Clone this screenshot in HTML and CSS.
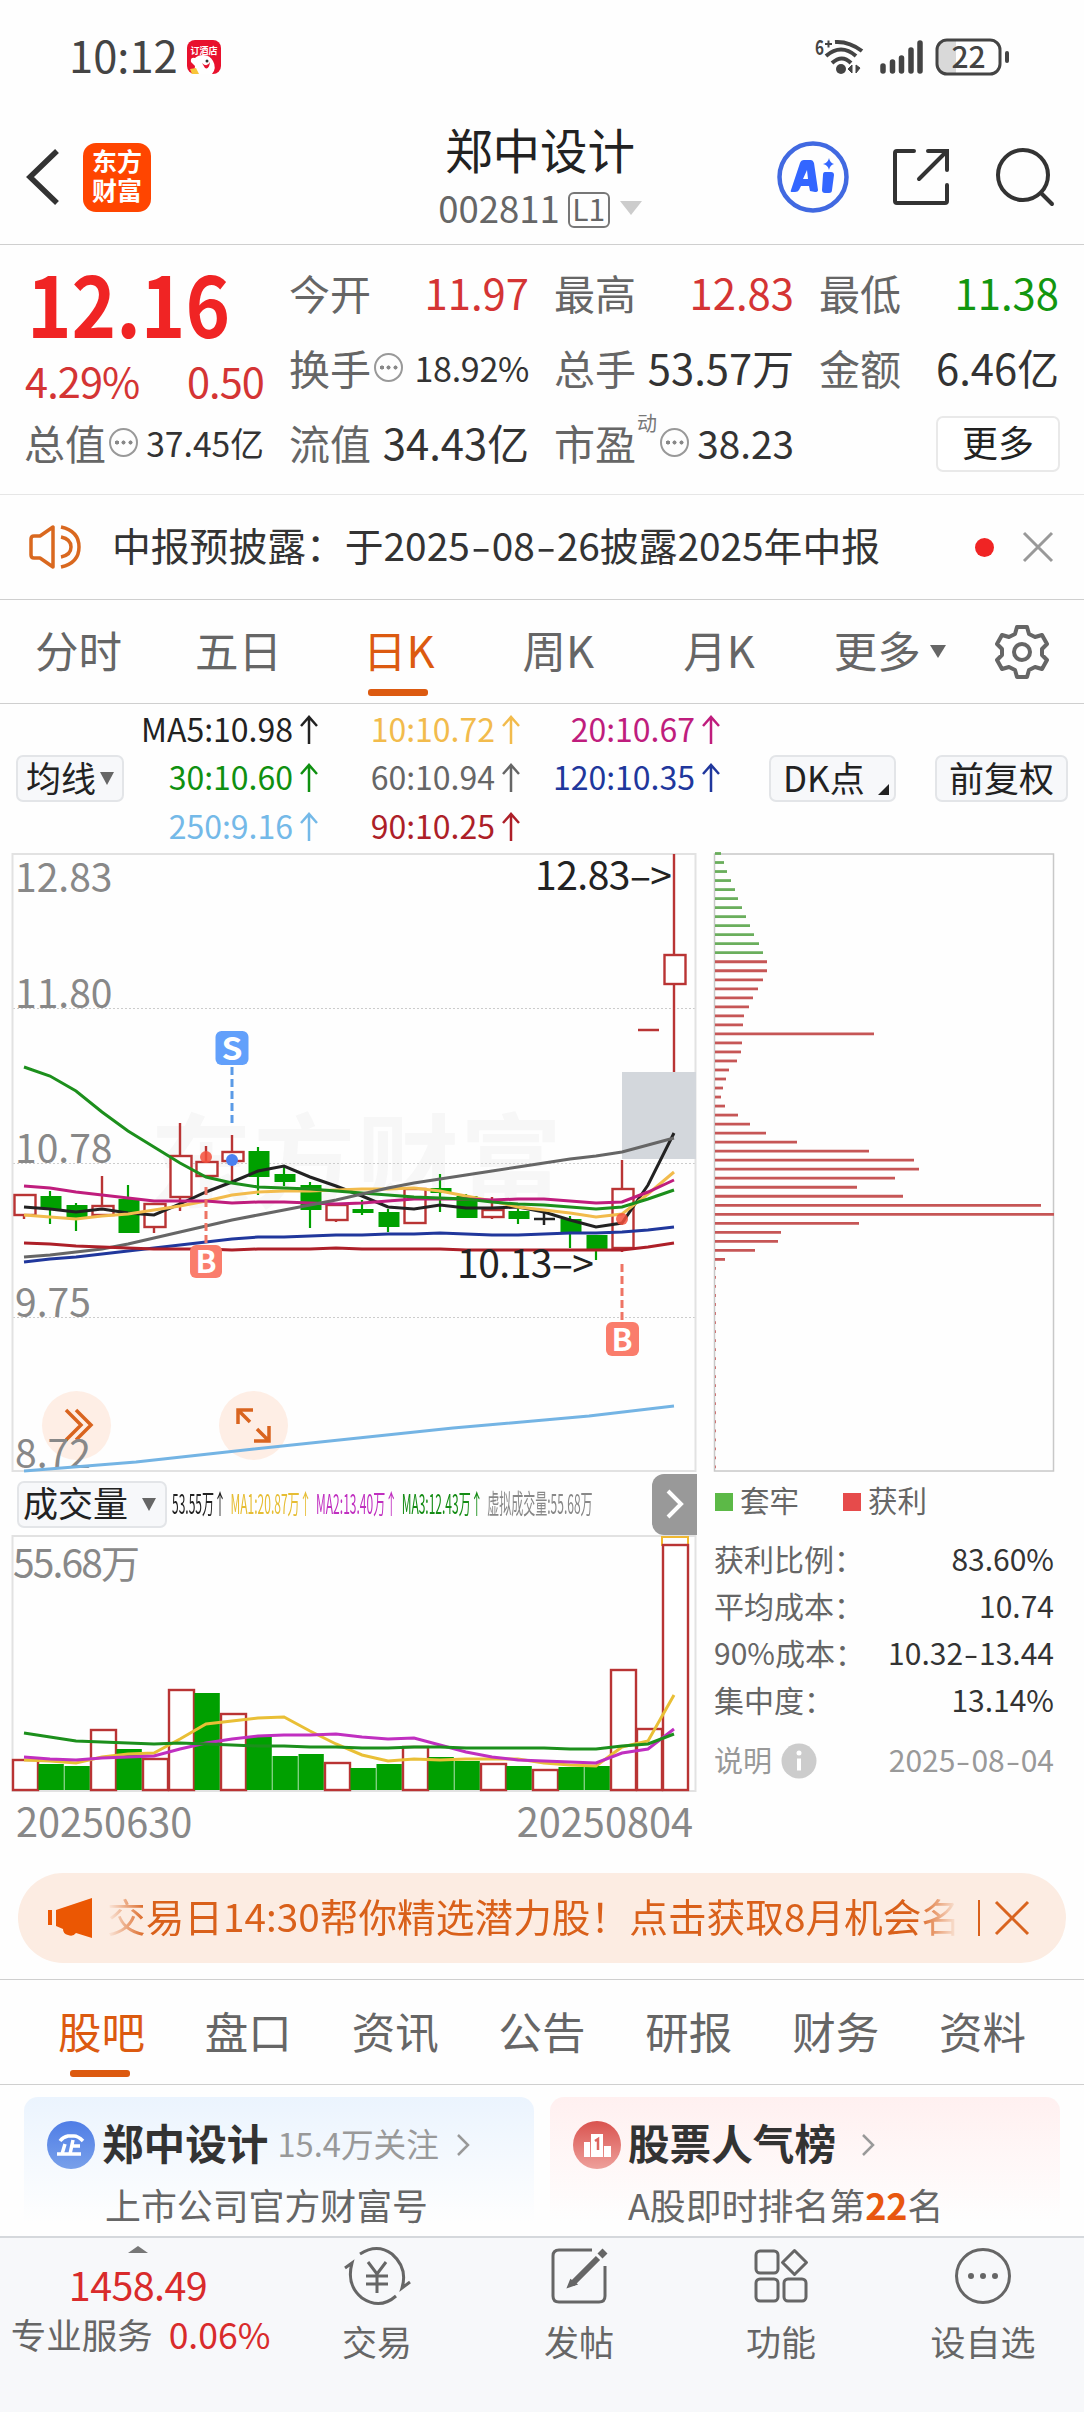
FILE: index.html
```html
<!DOCTYPE html>
<html lang="zh-CN">
<head>
  <meta charset="UTF-8" />
  <meta name="viewport" content="width=device-width, initial-scale=1.0"/>
  <title>郑中设计 002811</title>
  <link rel="stylesheet" href="styles.css">
</head>
<body>

  <div class="status-bar">
    <span class="clock">10:12</span>
    <svg class="app-badge" width="34" height="34" viewBox="0 0 34 34">
      <rect width="34" height="34" rx="8" fill="#e8112d"/>
      <text x="17" y="14" font-size="9" font-weight="700" fill="#fff" text-anchor="middle">订酒店</text>
      <path d="M8 18q-5-1-4 4l4 4-1 8h18q5-6 1-13-3-6-10-6-5 0-8 3z" fill="#fff"/>
      <circle cx="20" cy="21" r="1.5" fill="#333"/>
      <path d="M15 23q5 5 8-1-1 8-5 6z" fill="#e8112d"/>
      <path d="M3 29l6-1 3 6H5z" fill="#f8c53a"/>
    </svg>
    <div class="status-right">
      <svg width="50" height="38" viewBox="0 0 50 38">
        <text x="0" y="17" font-size="20" font-weight="700" fill="#444" textLength="9" lengthAdjust="spacingAndGlyphs">6</text>
        <path d="M10 6h7M13.500 2.500v7" stroke="#444" stroke-width="2"/>
        <g fill="none" stroke="#444" stroke-width="4">
          <path d="M20 4q14-1 27 9"/>
          <path d="M11 18q15-13 30 0"/>
          <path d="M17 25q10-9 19 0"/>
        </g>
        <circle cx="26" cy="31" r="5" fill="#444"/>
        <path d="M37 27v8l-4-4zM41 35v-8l4 3z" fill="#444" stroke="#444"/>
      </svg>
      <svg class="signal" width="44" height="36" viewBox="0 0 44 36" stroke="#444" stroke-width="5.500" stroke-linecap="round">
        <path d="M3 27v5M12.500 23v9M21.500 19v13M31 11v21M40 4v28"/>
      </svg>
      <svg class="battery" width="75" height="38" viewBox="0 0 75 38">
        <path d="M12 3h9v32h-9q-9 0-9-9V12q0-9 9-9z" fill="#d9d9d9"/>
        <rect x="2" y="2" width="63" height="34" rx="10" fill="none" stroke="#444" stroke-width="3"/>
        <path d="M72 15v8" stroke="#444" stroke-width="4" stroke-linecap="round"/>
        <text x="33.500" y="30" font-size="30" font-weight="500" fill="#444" text-anchor="middle">22</text>
      </svg>
    </div>
  </div>

  <div class="header">
    <div class="header-left">
      <svg width="34" height="56" viewBox="0 0 34 56"><path d="M31 2L4 28l27 26" fill="none" stroke="#333" stroke-width="5.500"/></svg>
      <div class="logo"><span>东方</span><span>财富</span></div>
    </div>
    <div class="header-title">
      <h1>郑中设计</h1>
      <div class="code">002811<span class="level">L1</span><i class="tri-down"></i></div>
    </div>
    <div class="header-right">
      <svg width="72" height="72" viewBox="0 0 72 72">
        <circle cx="36" cy="36" r="33.500" fill="none" stroke="#4169e1" stroke-width="4.500"/>
        <path d="M14 49l9-27q1-3 4-3h7q2 0 3 3l4 27q0 2-3 2l-5-1-1-5h-8l-2 4q-1 2-4 2h-3q-2 0-1-2zM26 38h5l-1-9z" fill="#3366ff" fill-rule="evenodd"/>
        <path d="M48 31h6q3 0 3 3l-2 15q0 3-3 3h-4q-3 0-3-3l1-15q0-3 2-3z" fill="#3366ff"/>
        <path d="M52 17q1 5 5 6-4 1-5 6-1-5-6-6 5-1 6-6z" fill="#3366ff"/>
      </svg>
      <svg class="share" width="58" height="58" viewBox="0 0 58 58" fill="none" stroke="#333" stroke-width="4" stroke-linecap="round">
        <path d="M22 3H5q-2 0-2 2v48q0 2 2 2h48q2 0 2-2V37"/>
        <path d="M36 3h19v19M54 4L27 31"/>
      </svg>
      <svg width="58" height="58" viewBox="0 0 58 58" fill="none" stroke="#333" stroke-width="4" stroke-linecap="round">
        <circle cx="27" cy="27" r="25"/><path d="M45 45l11 11"/>
      </svg>
    </div>
  </div>

  <div class="stats">
    <div class="price-col">
      <div class="price">12.16</div>
      <div class="change"><span>4.29%</span><span>0.50</span></div>
    </div>
    <div class="stat"><label>今开</label><b class="red">11.97</b></div>
    <div class="stat"><label>最高</label><b class="red">12.83</b></div>
    <div class="stat"><label>最低</label><b class="green">11.38</b></div>
    <div class="stat"><label>换手</label><i class="dots"></i><b class="mid">18.92%</b></div>
    <div class="stat"><label>总手</label><b>53.57万</b></div>
    <div class="stat"><label>金额</label><b>6.46亿</b></div>
    <div class="stat"><label>总值</label><i class="dots"></i><b class="small">37.45亿</b></div>
    <div class="stat"><label>流值</label><b>34.43亿</b></div>
    <div class="stat"><label>市盈</label><sup>动</sup><i class="dots"></i><b class="pe">38.23</b></div>
    <div class="stat"><button class="more-btn">更多</button></div>
  </div>

  <div class="notice">
    <svg width="52" height="46" viewBox="0 0 52 46" fill="none" stroke="#d9681f" stroke-width="3.500">
      <path d="M24 3v40L11 34H5q-3 0-3-3V15q0-3 3-3h6z" stroke-linejoin="round"/>
      <path d="M32 13q10 2 10 10t-10 10"/><path d="M32 3q18 4 18 20T32 43"/>
    </svg>
    <span class="notice-text">中报预披露：于2025<em>-</em>08<em>-</em>26披露2025年中报</span>
    <i class="red-dot"></i>
    <svg width="30" height="30" viewBox="0 0 30 30" stroke="#999" stroke-width="3"><path d="M1 1l28 28M29 1L1 29"/></svg>
  </div>

  <div class="period-tabs">
    <span>分时</span>
    <span>五日</span>
    <span class="active">日K</span>
    <span>周K</span>
    <span>月K</span>
    <span>更多<i class="tri-down"></i></span>
    <svg width="54" height="54" viewBox="0 0 54 54" fill="none" stroke="#666" stroke-width="4" stroke-linejoin="round">
      <path d="M22 2h10l2 7 6 3 7-2 5 9-5 5v6l5 5-5 9-7-2-6 3-2 7H22l-2-7-6-3-7 2-5-9 5-5v-6l-5-5 5-9 7 2 6-3z"/>
      <circle cx="27" cy="27" r="8"/>
    </svg>
  </div>

  <div class="ma-bar">
    <button class="pill">均线<i class="tri-down"></i></button>
    <div class="ma-grid">
      <span style="color:#222">MA5:10.98<svg class="up"><use href="#arrow-up"/></svg></span>
      <span style="color:#f2bb4c">10:10.72<svg class="up"><use href="#arrow-up"/></svg></span>
      <span style="color:#bf1d7d">20:10.67<svg class="up"><use href="#arrow-up"/></svg></span>
      <span style="color:#0f9010">30:10.60<svg class="up"><use href="#arrow-up"/></svg></span>
      <span style="color:#666">60:10.94<svg class="up"><use href="#arrow-up"/></svg></span>
      <span style="color:#20379c">120:10.35<svg class="up"><use href="#arrow-up"/></svg></span>
      <span style="color:#74b9e8">250:9.16<svg class="up"><use href="#arrow-up"/></svg></span>
      <span style="color:#ad1f28">90:10.25<svg class="up"><use href="#arrow-up"/></svg></span>
    </div>
    <button class="pill dk">DK点<i class="corner"></i></button>
    <button class="pill fq">前复权</button>
  </div>

  <div class="chart-area">
    <div class="chart-left">
      <svg id="kline" width="700" height="620" viewBox="0 0 700 620">
        <symbol id="arrow-up" viewBox="0 0 18 30"><path d="M9 29V2M1 11l8-9 8 9" fill="none" stroke="currentColor" stroke-width="2.500"/></symbol>
        <text x="150" y="347" font-size="102" font-weight="700" fill="#f7f7f7" textLength="412">东方财富</text>
        <g stroke="#ccc" stroke-dasharray="2 2">
          <path d="M13 155.500h683M13 310.500h683M13 464.500h683"/>
        </g>
        <rect x="12.500" y="1" width="683" height="617" fill="none" stroke="#e2e2e2" stroke-width="2"/>
        <rect x="622" y="219" width="74" height="87" fill="#d3d7dc"/>
        <g id="candles"></g>
        <g class="axis">
          <text x="15" y="38.500">12.83</text>
          <text x="15" y="154.500">11.80</text>
          <text x="15" y="309.500">10.78</text>
          <text x="15" y="463.500">9.75</text>
        </g>
        <g class="round-btn">
          <circle cx="76.500" cy="572.500" r="34.500"/>
          <path d="M66 557l15 15-15 15M76 557l15 15-15 15"/>
          <circle cx="253.500" cy="572.500" r="34.500"/>
          <path d="M250 569l-12-12M238 571v-14h15M257 576l12 12M269 573v15h-15"/>
        </g>
        <g class="axis"><text x="15" y="614.500">8.72</text></g>
        <g id="ma-lines" fill="none" stroke-width="3"></g>
        <g fill="none" stroke-width="3" stroke-dasharray="8 4">
          <path d="M232 214v58" stroke="#5a9ae6"/>
          <path d="M206 334v58M622 411v58" stroke="#ee7464"/>
        </g>
        <g fill="#f4503c" fill-opacity="0.850">
          <circle cx="206" cy="304" r="6"/><circle cx="622" cy="366" r="6"/>
        </g>
        <circle cx="232" cy="307" r="6" fill="#4a80f0"/>
        <g class="mark">
          <rect x="215.500" y="178" width="33" height="34" rx="6" fill="#62a0fb"/>
          <text x="232" y="207" textLength="21" lengthAdjust="spacingAndGlyphs">S</text>
          <rect x="190" y="392" width="32" height="33" rx="6" fill="#fa7d6c"/>
          <text x="206" y="420">B</text>
          <rect x="606" y="469" width="33" height="34" rx="6" fill="#fa7d6c"/>
          <text x="622" y="498">B</text>
        </g>
        <g font-size="39" fill="#222">
          <text x="535" y="37" textLength="137">12.83–&gt;</text>
          <text x="457" y="424.500" textLength="137">10.13–&gt;</text>
        </g>
      </svg>

      <div class="vol-head">
        <button class="pill vol">成交量<i class="tri-down"></i></button>
        <div class="vol-values">
          <span style="color:#222">53.55万↑</span>
          <span style="color:#e6bd33">MA1:20.87万↑</span>
          <span style="color:#c02fc0">MA2:13.40万↑</span>
          <span style="color:#148c14">MA3:12.43万↑</span>
          <span style="color:#888">虚拟成交量:55.68万</span>
        </div>
        <button class="next-btn"><svg width="18" height="32" viewBox="0 0 18 32"><path d="M2 3l13 13L2 29" fill="none" stroke="#fff" stroke-width="4"/></svg></button>
      </div>

      <svg id="volume" width="700" height="258" viewBox="0 0 700 258">
        <rect x="12.500" y="1" width="683" height="255" fill="none" stroke="#e2e2e2" stroke-width="2"/>
        <g id="vol-bars"></g>
        <g class="axis"><text x="13" y="43" textLength="127">55.68万</text></g>
        <g id="vol-lines" fill="none" stroke-width="3"></g>
      </svg>
      <div class="dates"><span>20250630</span><span>20250804</span></div>
    </div>

    <div class="chart-right">
      <svg id="chips" width="342" height="620" viewBox="0 0 342 620">
        <rect x="0.500" y="1" width="339" height="617" fill="none" stroke="#c8c8c8" stroke-width="1.500"/>
      </svg>
      <div class="legend"><i class="sq-green"></i>套牢<i class="sq-red"></i>获利</div>
      <div class="cost"><span>获利比例：</span><b>83.60%</b></div>
      <div class="cost"><span>平均成本：</span><b>10.74</b></div>
      <div class="cost"><span>90%成本：</span><b>10.32<em>-</em>13.44</b></div>
      <div class="cost"><span>集中度：</span><b>13.14%</b></div>
      <div class="cost explain">
        <span>说明<svg width="36" height="36" viewBox="0 0 36 36"><circle cx="18" cy="18" r="17.500" fill="#ccc"/><path d="M18 15.500v12" stroke="#fff" stroke-width="4"/><circle cx="18" cy="10" r="2.500" fill="#fff"/></svg></span>
        <b>2025<em>-</em>08<em>-</em>04</b>
      </div>
    </div>
  </div>

  <div class="promo">
    <svg width="48" height="42" viewBox="0 0 48 42" fill="#eb5703">
      <path d="M1 13h4v15H1zM9 13L45 1v40l-16-5q-3 4-8 2-5-1-5-6l-7-3z"/>
    </svg>
    <div class="promo-text">交易日14:30帮你精选潜力股！点击获取8月机会名</div>
    <i class="divider"></i>
    <svg width="34" height="34" viewBox="0 0 34 34" stroke="#d9641f" stroke-width="3"><path d="M1 1l32 32M33 1L1 33"/></svg>
  </div>

  <div class="section-tabs">
    <span class="active">股吧</span>
    <span>盘口</span>
    <span>资讯</span>
    <span>公告</span>
    <span>研报</span>
    <span>财务</span>
    <span>资料</span>
  </div>

  <div class="cards">
    <div class="card blue">
      <div class="card-title">
        <svg width="48" height="48" viewBox="0 0 48 48">
          <defs><linearGradient id="gb" x1="0" y1="0" x2="0" y2="1"><stop offset="0" stop-color="#4f7de6"/><stop offset="1" stop-color="#78a0ea"/></linearGradient></defs>
          <circle cx="24" cy="24" r="24" fill="url(#gb)"/>
          <path d="M13 20q3-4 8-5h6q4 0 9 5M26 19l-3 14M25 25h8M18 23l-3 10M10 33h24" fill="none" stroke="#fff" stroke-width="3.500"/>
        </svg>
        <strong>郑中设计</strong><small>15.4万关注</small>
        <svg class="chev" width="14" height="24" viewBox="0 0 14 24"><path d="M2 2l10 10L2 22" fill="none" stroke="#999" stroke-width="2.500"/></svg>
      </div>
      <p>上市公司官方财富号</p>
    </div>
    <div class="card pink">
      <div class="card-title">
        <svg width="48" height="48" viewBox="0 0 48 48">
          <defs><linearGradient id="gr" x1="0" y1="0" x2="0" y2="1"><stop offset="0" stop-color="#d9534f"/><stop offset="1" stop-color="#eea09b"/></linearGradient></defs>
          <circle cx="24" cy="24" r="24" fill="url(#gr)"/>
          <path d="M11 21h6v15h-6zM18 13h12v23H18zM31 25h7v11h-7z" fill="#fff"/>
          <path d="M22 20l3-2v11" fill="none" stroke="#dd6560" stroke-width="2.500"/>
        </svg>
        <strong>股票人气榜</strong>
        <svg class="chev" width="14" height="24" viewBox="0 0 14 24"><path d="M2 2l10 10L2 22" fill="none" stroke="#999" stroke-width="2.500"/></svg>
      </div>
      <p>A股即时排名第<b>22</b>名</p>
    </div>
  </div>

  <div class="bottom-bar">
    <div class="index">
      <i class="tri-up"></i>
      <div class="index-value">1458.49</div>
      <div class="index-name">专业服务<span>0.06%</span></div>
    </div>
    <div class="nav-item">
      <svg width="66" height="58" viewBox="0 0 66 58" fill="none" stroke="#666" stroke-width="3">
        <path d="M16 7Q33-4 48 7q16 14 10 34l8-6M52 49Q36 63 18 51 2 38 8 16L1 21"/>
        <path d="M24 15l9 12 9-12M33 27v19M22 29h22M22 37h22"/>
      </svg>
      <span>交易</span>
    </div>
    <div class="nav-item">
      <svg width="58" height="58" viewBox="0 0 58 58" fill="none" stroke="#666" stroke-width="3">
        <path d="M42 3H9q-6 0-6 6v40q0 6 6 6h40q6 0 6-6V19"/>
        <path d="M48 11L22 37" stroke-width="6"/><path d="M50 9l5-5" stroke-width="7"/><path d="M21 34l-2 5 6-2z"/>
      </svg>
      <span>发帖</span>
    </div>
    <div class="nav-item">
      <svg width="54" height="54" viewBox="0 0 54 54" fill="none" stroke="#666" stroke-width="3">
        <rect x="2" y="2" width="22" height="22" rx="4"/><rect x="2" y="30" width="22" height="22" rx="4"/>
        <rect x="30" y="30" width="22" height="22" rx="4"/><path d="M40.500 1.500l12 12-12 12-12-12z" stroke-linejoin="round"/>
      </svg>
      <span>功能</span>
    </div>
    <div class="nav-item">
      <svg width="58" height="58" viewBox="0 0 58 58" fill="none" stroke="#666" stroke-width="3">
        <circle cx="29" cy="29" r="26.500"/>
        <g fill="#666" stroke="none"><circle cx="17" cy="29" r="3"/><circle cx="29" cy="29" r="3"/><circle cx="41" cy="29" r="3"/></g>
      </svg>
      <span>设自选</span>
    </div>
  </div>

  <script>
    const NS = 'http://www.w3.org/2000/svg';
    const RED = '#b93434', GREEN = '#00a000';
    const x = i => 24 + 26 * i;

    const add = (parent, tag, attrs) => {
      const el = document.createElementNS(NS, tag);
      for (const k in attrs) el.setAttribute(k, attrs[k]);
      document.getElementById(parent).appendChild(el);
    };

    // [direction, high, bodyTop, bodyBottom, low]
    const candles = [
      ['r', 342, 342, 362, 366], ['g', 338, 343, 356, 371], ['g', 350, 352, 365, 378],
      ['r', 323, 353, 362, 362], ['g', 332, 346, 380, 380], ['r', 351, 351, 374, 380],
      ['r', 270, 303, 344, 358], ['r', 293, 309, 323, 323], ['r', 282, 299, 308, 329],
      ['g', 294, 298, 324, 342], ['g', 314, 321, 329, 333], ['g', 329, 332, 357, 375],
      ['r', 352, 352, 367, 369], ['g', 347, 356, 360, 362], ['g', 356, 359, 374, 379],
      ['r', 336, 336, 370, 370], ['g', 321, 335, 340, 359], ['g', 341, 343, 365, 365],
      ['r', 344, 357, 364, 366], ['g', 354, 358, 366, 371], ['k', 360, 366, 366, 372],
      ['g', 363, 366, 379, 395], ['g', 382, 382, 396, 407], ['r', 307, 336, 395, 399],
      ['d', 177, 177, 177, 177], ['r', 1, 102, 131, 219]
    ];
    candles.forEach(([dir, high, top, bottom, low], i) => {
      const c = x(i);
      if (dir === 'd') {
        add('candles', 'path', { d: `M${c - 10} ${top}h21`, stroke: RED, 'stroke-width': 2.5 });
      } else if (dir === 'k') {
        add('candles', 'path', { d: `M${c - 10} ${top}h21M${c} ${high}v${low - high}`, stroke: '#222', 'stroke-width': 2.5 });
      } else if (dir === 'g') {
        add('candles', 'path', { d: `M${c} ${high}V${low}`, stroke: GREEN, 'stroke-width': 2.2 });
        add('candles', 'rect', { x: c - 9.5, y: top, width: 21, height: bottom - top, fill: GREEN });
      } else {
        add('candles', 'path', { d: `M${c} ${high}V${top}M${c} ${bottom}V${low}`, stroke: RED, 'stroke-width': 2.4 });
        add('candles', 'rect', { x: c - 9.5, y: top, width: 21, height: bottom - top, fill: '#fff', stroke: RED, 'stroke-width': 2.4 });
      }
    });

    const drawLine = (parent, color, ys) =>
      add(parent, 'polyline', { stroke: color, points: ys.map((y, i) => x(i) + ',' + y).join(' ') });

    drawLine('ma-lines', '#222', [354,356,359,356,360,362,351,339,329,318,313,324,333,343,354,356,352,355,355,354,359,367,374,370,332,280]);
    drawLine('ma-lines', '#f2bb4c', [362,364,366,363,361,357,353,348,342,339,338,338,337,336,336,335,338,343,348,354,357,360,364,361,341,319]);
    drawLine('ma-lines', '#bf1d7d', [333,335,339,342,345,348,348,348,350,349,349,350,351,350,348,346,346,346,347,346,346,348,350,349,339,327]);
    drawLine('ma-lines', '#1c8f1c', [214,223,238,259,278,294,310,324,330,334,335,336,338,340,342,344,345,346,349,351,352,354,356,354,346,337]);
    drawLine('ma-lines', '#666', [404,402,399,396,391,385,379,373,367,362,357,352,347,341,335,330,326,322,318,314,310,306,303,299,292,285]);
    drawLine('ma-lines', '#20379c', [409,406,404,401,398,395,392,389,386,384,384,383,382,382,381,381,380,381,382,382,381,380,380,379,377,374]);
    drawLine('ma-lines', '#ad1f28', [390,391,393,394,395,396,396,396,397,396,396,396,395,396,396,396,396,397,397,397,397,397,397,397,394,390]);
    add('ma-lines', 'polyline', { stroke: '#74b4e4', points: '24,618 136,609 254,596 453,575 589,563 674,553' });

    const volumes = [
      'r225','g229','g231','r195','g214','r224','r155','g158','r179','g202','g221','g219','r228',
      'g233','g229','r212','g222','g226','r229','g231','r235','g232','g231','r135','r194','r10'
    ];
    add('vol-bars', 'path', { d: 'M662 11V2h26v9', fill: 'none', stroke: '#f0b830', 'stroke-width': 2 });
    volumes.forEach((v, i) => {
      const top = +v.slice(1), left = x(i) - 11;
      if (v[0] === 'g') add('vol-bars', 'rect', { x: left - 0.5, y: top, width: 25.3, height: 255 - top, fill: GREEN });
      else add('vol-bars', 'rect', { x: left, y: top, width: 25, height: 255 - top, fill: '#fff', stroke: RED, 'stroke-width': 2.4 });
    });
    drawLine('vol-lines', '#e9bf36', [225,226,228,222,219,218,204,189,186,183,182,196,209,220,226,224,225,224,224,224,228,230,231,212,206,160]);
    drawLine('vol-lines', '#c02fc0', [222,224,225,223,222,221,214,208,204,201,200,200,199,202,204,203,210,217,222,225,226,227,228,218,214,194]);
    drawLine('vol-lines', '#1c8f1c', [198,202,206,207,208,209,208,209,210,211,211,212,212,213,213,212,212,213,213,213,213,214,214,211,209,199]);

    // chip distribution, top price first
    const chips = [
      6,9,12,16,20,23,27,31,35,39,44,48,
      52,52,48,43,38,34,29,28,159,27,26,22,14,11,8,6,10,23,35,51,82,154,199,204,180,142,188,326,339,144,66,63,40,10
    ];
    for (let k = 0; k < 69; k++) {
      const y = 0.5 + 9.02 * k;
      add('chips', 'path', { d: `M1 ${y}h${chips[k] || 0.8}`, stroke: k < 12 ? '#6aae5c' : '#c65656', 'stroke-width': 2.8 });
    }
  </script>

</body>
</html>
```
FILE: styles.css
```css
* {
  box-sizing: border-box;
}

body {
  margin: 0;
  width: 1084px;
  height: 2412px;
  overflow: hidden;
  background: #fefefe;
  color: #333;
  font-family: "Noto Sans CJK SC", sans-serif;
  font-size: 41px;
  line-height: 1;
}

svg {
  display: block;
  flex: none;
  overflow: visible;
}

i, em {
  font-style: normal;
}

b {
  font-weight: 400;
}

button {
  font-family: inherit;
  color: #222;
  padding: 0;
}

.red { color: #d43434; }
.green { color: #12960f; }

.tri-down {
  display: inline-block;
  border: 8px solid transparent;
  border-top: 13px solid #666;
  border-bottom: 0;
}

/* status bar */
.status-bar {
  display: flex;
  align-items: center;
  height: 110px;
  padding: 4px 74px 0 69px;
  color: #444;
}

.clock {
  font-size: 43.500px;
  line-height: 50px;
  width: 118px;
  margin-top: -5px;
}

.status-right {
  display: flex;
  align-items: center;
  margin-left: auto;
}

.signal { margin: 0 11px 0 15px; }

/* header */
.header {
  display: grid;
  grid-template-columns: 1fr auto 1fr;
  align-items: center;
  height: 135px;
  border-bottom: 1px solid #cfcfcf;
}

.header-left {
  display: flex;
  align-items: center;
  gap: 23px;
  padding-left: 26px;
}

.logo {
  width: 68px;
  height: 69px;
  border-radius: 13px;
  background: #ff4500;
  color: #fff;
  display: flex;
  flex-direction: column;
  align-items: center;
  justify-content: center;
  font-size: 25px;
  font-weight: 700;
  line-height: 29px;
  padding-bottom: 4px;
}

.header-title {
  text-align: center;
}

.header-title h1 {
  margin: 0 4px 0 0;
  font-size: 47.500px;
  font-weight: 400;
  line-height: 62px;
  color: #222;
  height: 62px;
}

.code {
  display: flex;
  align-items: center;
  justify-content: center;
  margin-right: 4px;
  font-size: 36.500px;
  line-height: 48px;
  height: 56px;
  color: #666;
}

.level {
  width: 42px;
  height: 36px;
  margin: 3px 10px 0 8px;
  border: 2px solid #777;
  border-radius: 6px;
  font-size: 30px;
  line-height: 28px;
  text-align: center;
}

.code .tri-down {
  border-width: 14px 11px 0;
  border-top-color: #ccc;
}

.header-right {
  display: flex;
  align-items: center;
  justify-content: flex-end;
  padding-right: 30px;
}

.share { margin: 0 46px 0 43px; }

/* quote numbers */
.stats {
  display: grid;
  grid-template-columns: repeat(4, 239px);
  grid-template-rows: repeat(3, 75px);
  column-gap: 26px;
  height: 250px;
  padding: 12px 25px;
  border-bottom: 1px solid #e6e6e6;
}

.price-col {
  grid-row: 1 / 3;
  color: #d43434;
}

.price {
  font-size: 84px;
  font-weight: 700;
  line-height: 90px;
  height: 100px;
  margin-left: 2px;
  color: #f02424;
  transform: scaleX(0.9);
  transform-origin: 0 0;
}

.change {
  display: flex;
  justify-content: space-between;
  font-size: 41.500px;
  line-height: 46px;
  letter-spacing: -0.900px;
}

.stat {
  display: flex;
  align-items: center;
  line-height: 75px;
  padding-bottom: 5px;
}

.stat label {
  color: #666;
  margin-left: -1px;
}

.stat b {
  margin-left: auto;
  font-size: 41.800px;
}

.stat .mid { font-size: 34px; letter-spacing: -0.300px; }
.stat .small { font-size: 33.700px; }
.stat .pe { font-size: 38.700px; }

.stat sup {
  font-size: 20px;
  line-height: 20px;
  color: #777;
  margin: 0 3px 38px 1px;
}

.dots {
  width: 29px;
  height: 29px;
  margin-left: 3px;
  border: 2px solid #999;
  border-radius: 50%;
  background:
    radial-gradient(circle, #888 1.800px, transparent 2.300px) -6.500px 0 no-repeat,
    radial-gradient(circle, #888 1.800px, transparent 2.300px) 0 0 no-repeat,
    radial-gradient(circle, #888 1.800px, transparent 2.300px) 6.500px 0 no-repeat;
}

sup + .dots { margin-left: 0; }

.more-btn {
  width: 124px;
  height: 56px;
  margin: 3px -1px 0 auto;
  border: 2px solid #e9e9e9;
  border-radius: 7px;
  background: #fff;
  font-size: 36px;
  line-height: 44px;
  padding-bottom: 6px;
}

/* notice */
.notice {
  display: flex;
  align-items: center;
  height: 105px;
  padding: 0 31px 0 29px;
  border-bottom: 1px solid #cfcfcf;
}

.notice-text {
  margin-left: 31px;
  margin-top: -6px;
  font-size: 38.800px;
  line-height: 50px;
}

.notice-text em {
  display: inline-block;
  width: 22px;
  text-align: center;
  transform: scaleX(1.500);
}

.red-dot {
  width: 19px;
  height: 19px;
  border-radius: 50%;
  background: #f02424;
  margin: 0 29px 0 auto;
}

/* period tabs */
.period-tabs {
  display: flex;
  align-items: center;
  height: 104px;
  padding: 0 35px 0 35px;
  border-bottom: 1px solid #cfcfcf;
  font-size: 43.500px;
  line-height: 98px;
  color: #666;
}

.period-tabs span {
  position: relative;
  height: 102px;
}

.period-tabs span + span { margin-left: 73px; }
.period-tabs span:nth-child(3) { margin-left: 81px; }
.period-tabs span:nth-child(4) { margin-left: 88px; }
.period-tabs span:nth-child(5) { margin-left: 89px; }
.period-tabs span:nth-child(6) { margin-left: 79px; }
.period-tabs svg { margin-left: auto; }

.period-tabs .tri-down {
  border-width: 13px 8px 0;
  margin-left: 9px;
  vertical-align: 10px;
}

.period-tabs .active,
.section-tabs .active {
  color: #dc5a10;
}

.period-tabs .active::after,
.section-tabs .active::after {
  content: "";
  position: absolute;
  left: 50%;
  bottom: 7px;
  width: 60px;
  height: 7px;
  margin-left: -31px;
  border-radius: 3px;
  background: #dc5a10;
}

/* moving averages */
.ma-bar {
  display: flex;
  align-items: center;
  height: 149px;
  padding-left: 16px;
}

.pill {
  display: flex;
  align-items: center;
  height: 47px;
  width: 108px;
  padding: 0 0 4px 8px;
  border: 2px solid #e3e5e8;
  border-radius: 7px;
  background: #f7f8fa;
  font-size: 35px;
  line-height: 40px;
}

.pill .tri-down {
  border-width: 13px 7px 0;
  margin: 4px 0 0 4px;
}

.pill.dk {
  position: relative;
  width: 127px;
  margin-left: 49px;
  padding-left: 12px;
}

.pill.fq {
  width: 133px;
  margin-left: 39px;
  padding-left: 12px;
}

.corner {
  position: absolute;
  right: 5px;
  bottom: 5px;
  border-bottom: 11px solid #222;
  border-left: 11px solid transparent;
}

.ma-grid {
  display: grid;
  grid-template-columns: 194px 202px 200px;
  grid-auto-rows: 48.500px;
  font-size: 32px;
  line-height: 44px;
}

.ma-grid span {
  display: flex;
  justify-content: flex-end;
}

.up {
  width: 18px;
  height: 30px;
  margin: 9px 0 0 7px;
}

/* charts */
.chart-area {
  display: flex;
  height: 1020px;
}

.chart-left {
  width: 714px;
}

.axis {
  font-size: 39px;
  fill: #888;
}

.round-btn circle { fill: #feeee5; }

.round-btn path {
  fill: none;
  stroke: #d9641f;
  stroke-width: 3.500;
}

.mark text {
  font-size: 31px;
  font-weight: 700;
  fill: #fff;
  text-anchor: middle;
}

.vol-head {
  display: flex;
  align-items: center;
  height: 62px;
  width: 697px;
  padding-left: 17px;
}

.pill.vol {
  flex: none;
  width: 150px;
  margin-right: 5px;
  padding-left: 4px;
}

.pill.vol .tri-down { margin-left: 14px; }

/* squeezed so that all five values fit on one line */
.vol-values {
  flex: none;
  display: flex;
  gap: 10px;
  width: 430px;
  margin-top: -3px;
  font-size: 27px;
  line-height: 40px;
  white-space: nowrap;
  transform: scaleX(0.445);
  transform-origin: 0 0;
}

.next-btn {
  display: flex;
  align-items: center;
  justify-content: center;
  width: 45px;
  height: 61px;
  margin-left: auto;
  border: 0;
  border-radius: 12px 0 0 12px;
  background: #999;
}

.dates {
  display: flex;
  justify-content: space-between;
  width: 693px;
  padding-left: 16px;
  font-size: 39.700px;
  line-height: 54px;
  color: #888;
}

.chart-right {
  width: 340px;
}

.legend {
  display: flex;
  align-items: center;
  height: 54px;
  margin-bottom: 10px;
  font-size: 29.500px;
  color: #666;
}

.legend i {
  width: 18px;
  height: 18px;
  margin: 3px 7px 0 1px;
}

.sq-green { background: #5cb947; }
.legend .sq-red { background: #e64b4b; margin-left: 44px; }

.cost {
  display: flex;
  justify-content: space-between;
  height: 47px;
  font-size: 30px;
  line-height: 42px;
  color: #666;
}

.cost b { color: #333; }

.cost em {
  display: inline-block;
  width: 16px;
  text-align: center;
  transform: scaleX(1.400);
}

.explain {
  margin-top: 13px;
  color: #999;
}

.explain b { color: #999; }

.explain span {
  display: flex;
  font-size: 29px;
}

.explain svg { margin: 5px 0 0 9px; }

/* promo */
.promo {
  display: flex;
  align-items: center;
  height: 90px;
  margin: 0 18px;
  padding: 0 37px 0 29px;
  border-radius: 45px;
  background: #fcece2;
  color: #d9601a;
}

.promo-text {
  flex: none;
  width: 852px;
  margin: -6px 0 0 12px;
  white-space: nowrap;
  font-size: 38.700px;
  line-height: 60px;
  -webkit-mask-image: linear-gradient(90deg, transparent, #000 40px, #000 810px, transparent);
  mask-image: linear-gradient(90deg, transparent, #000 40px, #000 810px, transparent);
}

.divider {
  width: 2px;
  height: 36px;
  margin: 0 15px 0 19px;
  background: #d9601a;
}

/* section tabs */
.section-tabs {
  display: flex;
  height: 106px;
  margin-top: 16px;
  padding: 0 28px;
  border-top: 1px solid #cfcfcf;
  border-bottom: 1px solid #cfcfcf;
  font-size: 43.500px;
  line-height: 102px;
  color: #666;
}

.section-tabs span {
  position: relative;
  flex: 1;
  text-align: center;
}

/* cards */
.cards {
  display: flex;
  gap: 16px;
  height: 151px;
  padding: 12px 24px 0;
}

.card {
  width: 510px;
  padding: 21px 23px 0;
  border-radius: 14px 14px 0 0;
}

.card.blue { background: linear-gradient(#ebf4fe, #fefefe 90%); }
.card.pink { background: linear-gradient(#fff0f0, #fefefe 90%); }

.card-title {
  display: flex;
  align-items: center;
  height: 54px;
}

.card strong {
  margin: -6px 0 0 7px;
  font-size: 41.600px;
  line-height: 54px;
}

.card small {
  margin: -3px 0 0 9px;
  font-size: 32.700px;
  color: #999;
}

.chev { margin-left: 17px; }
.pink .chev { margin-left: 25px; }

.card p {
  margin: 10px 0 0 58px;
  font-size: 35.900px;
  line-height: 44px;
  color: #666;
}

.pink p { margin-left: 55px; }

.card p b {
  font-weight: 700;
  color: #e8560f;
}

/* bottom bar */
.bottom-bar {
  display: flex;
  height: 176px;
  border-top: 2px solid #d5d8dc;
  background: #f7f8fa;
  color: #666;
}

.index {
  width: 276px;
  padding-top: 8px;
  text-align: center;
}

.tri-up {
  display: block;
  width: 0;
  margin: 0 auto;
  border: 10px solid transparent;
  border-top: 0;
  border-bottom: 7px solid #777;
}

.index-value {
  margin-top: 3px;
  font-size: 39.500px;
  line-height: 56px;
  color: #d92b2b;
  letter-spacing: -0.600px;
}

.index-name {
  margin: 1px 0 0 5px;
  font-size: 35.500px;
  line-height: 42px;
  white-space: nowrap;
}

.index-name span {
  margin-left: 16px;
  color: #d92b2b;
}

.nav-item {
  width: 202px;
  display: flex;
  flex-direction: column;
  align-items: center;
}

.nav-item svg {
  height: 58px;
  margin-top: 9px;
}

.nav-item span {
  font-size: 35px;
  line-height: 72px;
}
```
